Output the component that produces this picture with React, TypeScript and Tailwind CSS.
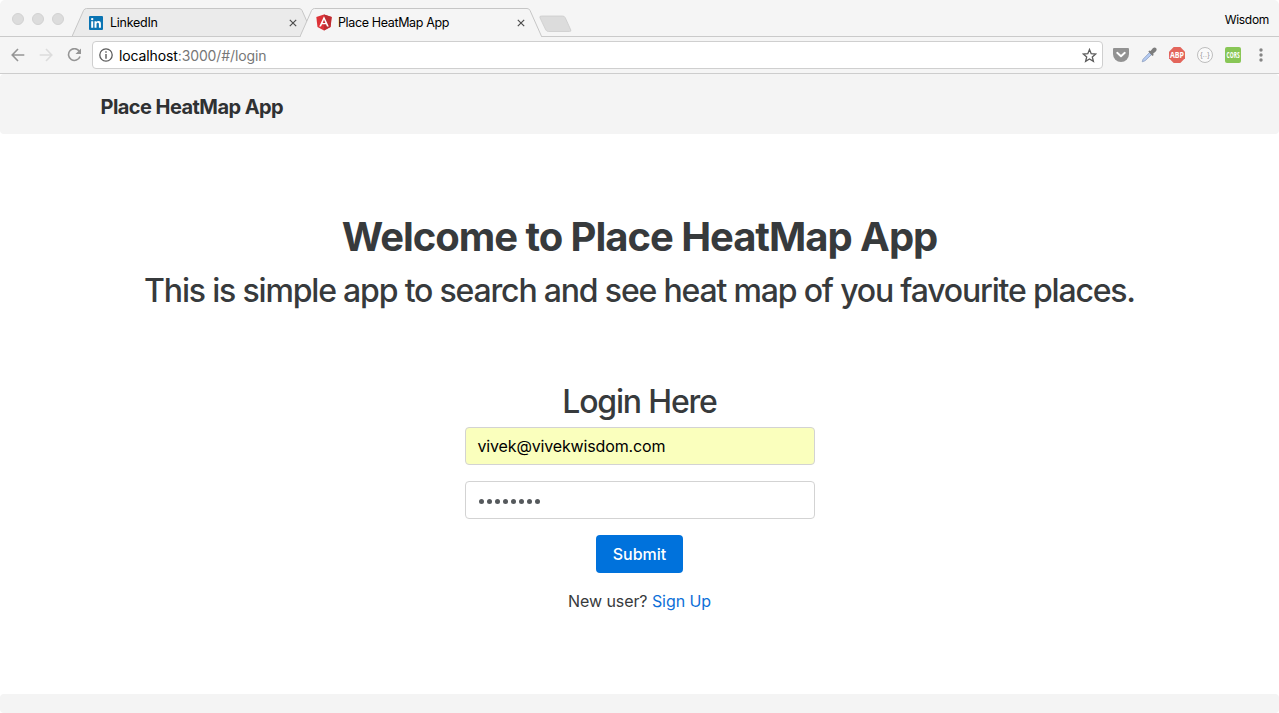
import React from "react";

function TabShape({ active }: { active?: boolean }) {
  return (
    <svg className="absolute inset-0" width="242" height="29" viewBox="0 0 242 29" fill="none">
      <path
        d="M0 28.5 L11.6 2.4 Q12.6 0.5 14.5 0.5 H227 Q229 0.5 230 2.4 L241.6 28.5"
        fill={active ? "#f5f5f5" : "#ebebeb"}
        stroke="#c6c6c6"
      />
      {active ? <path d="M1 28.5H241" stroke="#f5f5f5" /> : <path d="M0 28.5H242" stroke="#cacaca" />}
    </svg>
  );
}

function CloseIcon() {
  return (
    <svg width="8" height="8" viewBox="0 0 8 8" stroke="#4d4d4d" strokeWidth="1.2">
      <path d="M0.8 0.8L7.2 7.2M7.2 0.8L0.8 7.2" />
    </svg>
  );
}

function LinkedInIcon() {
  return (
    <svg width="14" height="14" viewBox="0 0 14 14">
      <rect width="14" height="14" rx="1" fill="#0a74b3" />
      <circle cx="3.2" cy="3.1" r="1.2" fill="#fff" />
      <path d="M2.2 5.2h2v6.6h-2zM5.5 5.2h1.9v.9c.4-.7 1.1-1.1 2-1.1 2 0 2.5 1.3 2.5 3v3.8h-2V8.4c0-.9-.1-1.7-1.1-1.7-1 0-1.3.7-1.3 1.7v3.4h-2z" fill="#fff" />
    </svg>
  );
}

function AngularIcon() {
  return (
    <svg width="16" height="17" viewBox="0 0 16 17">
      <path d="M8 0.4L15.7 3.1L14.5 13L8 16.4L1.5 13L0.3 3.1Z" fill="#dd3237" />
      <path d="M8 0.4L15.7 3.1L14.5 13L8 16.4Z" fill="#bd2d32" />
      <path d="M8 2.2L3.2 12.6H5L6 10.3H10L11 12.6H12.8ZM8 5.7L9.4 8.9H6.6Z" fill="#fff" fillRule="evenodd" />
    </svg>
  );
}

function TitleBar() {
  return (
    <div className="flex h-[37px] items-start border-b border-[#cacaca]">
      <div className="flex gap-2 pt-[13px] pl-3">
        <span className="size-3 rounded-full border border-[#d2d2d2] bg-[#dcdcdc]" />
        <span className="size-3 rounded-full border border-[#d2d2d2] bg-[#dcdcdc]" />
        <span className="size-3 rounded-full border border-[#d2d2d2] bg-[#dcdcdc]" />
      </div>
      <div className="relative mt-2 ml-2 flex h-[29px] w-[242px] shrink-0 items-center">
        <TabShape />
        <div className="relative flex flex-1 items-center pr-[17px] pl-[17px]">
          <LinkedInIcon />
          <span className="ml-[7px] flex-1 pt-px text-[12.5px] leading-[18px] tracking-[-0.27px] text-black">LinkedIn</span>
          <CloseIcon />
        </div>
      </div>
      <div className="relative mt-2 -ml-[14px] flex h-[29px] w-[242px] shrink-0 items-center">
        <TabShape active />
        <div className="relative flex flex-1 items-center pr-[17px] pl-4">
          <AngularIcon />
          <span className="ml-[6px] flex-1 pt-px text-[12.5px] leading-[18px] tracking-[-0.36px] text-black">Place HeatMap App</span>
          <CloseIcon />
        </div>
      </div>
      <svg className="mt-[15px] -ml-[3px]" width="33" height="18" viewBox="0 0 33 18">
        <path d="M2.5 1H23.5Q25.5 1 26.3 2.8L31.8 15Q32.3 16.5 30.5 16.5H9.5Q7.5 16.5 6.7 14.8L0.9 2.6Q0.3 1 2.5 1Z" fill="#dcdcdc" stroke="#cbcbcb" strokeWidth="0.8" />
      </svg>
      <span className="mt-3 mr-[10px] ml-auto text-[12px] leading-4 tracking-[-0.3px] text-black">Wisdom</span>
    </div>
  );
}

function Extensions() {
  return (
    <div className="flex items-center gap-3">
      <svg width="16" height="16" viewBox="0 0 16 16">
        <path d="M1 1h14Q16 1 16 2V7a8 8 0 0 1-16 0V2Q0 1 1 1Z" fill="#929292" />
        <path d="M4.2 5.8L8 9.3L11.8 5.8" fill="none" stroke="#fff" strokeWidth="1.9" strokeLinecap="round" strokeLinejoin="round" />
      </svg>
      <svg width="16" height="16" viewBox="0 0 16 16">
        <path d="M1.2 14.8L2.1 12.2L8.6 5.5L10.6 7.5L4.1 13.7Z" fill="#b4cbf3" stroke="#94a5c4" strokeWidth="0.9" />
        <path d="M7.3 4.6L8.6 3.5L9.6 4L11.8 1.3Q13.5 -0.2 15 1.100Q16.400 2.700 14.700 4.500L12.100 6.700L12.700 7.900L11.400 9Z" fill="#7d7d7d" />
      </svg>
      <svg width="16" height="16" viewBox="0 0 16 16">
        <path d="M4.700 0H11.300L16 4.700V11.300L11.300 16H4.700L0 11.300V4.700Z" fill="#e3655b" />
        <text x="1" y="11" fontSize="8" fontWeight="700" fontFamily="Open Sans, sans-serif" fill="#fff" textLength="14" lengthAdjust="spacingAndGlyphs">ABP</text>
      </svg>
      <svg width="16" height="16" viewBox="0 0 16 16">
        <circle cx="8" cy="8" r="7.500" fill="#fafafa" stroke="#bdbdbd" />
        <text x="3.200" y="10" fontSize="7" fontFamily="Liberation Sans, sans-serif" fill="#999" textLength="9.500">{"{..}"}</text>
      </svg>
      <svg width="16" height="16" viewBox="0 0 16 16">
        <rect width="16" height="16" rx="2" fill="#88c656" />
        <g transform="translate(1.600 10.800) scale(0.620 1)">
          <text fontSize="8" fontWeight="700" fontFamily="Open Sans, sans-serif" fill="#fff">CORS</text>
        </g>
      </svg>
      <svg className="ml-1" width="8" height="16" viewBox="0 0 8 16" fill="#858585">
        <circle cx="4" cy="3" r="1.700" />
        <circle cx="4" cy="8" r="1.700" />
        <circle cx="4" cy="13" r="1.700" />
      </svg>
    </div>
  );
}

function Toolbar() {
  return (
    <div className="flex h-[37px] items-center border-b border-[#cdcdcd] pr-[14px] pl-[11px]">
      <svg width="14" height="14" viewBox="0 0 14 14" fill="none" stroke="#959595" strokeWidth="1.600">
        <path d="M13.300 7H1.300M7 1L1.200 7L7 13" />
      </svg>
      <svg className="ml-[14px]" width="14" height="14" viewBox="0 0 14 14" fill="none" stroke="#dcdcdc" strokeWidth="1.600">
        <path d="M0.700 7H12.700M7 1L12.800 7L7 13" />
      </svg>
      <svg className="ml-[14px]" width="15" height="14" viewBox="0 0 15 14">
        <path d="M12.300 3.200A5.900 5.900 0 1 0 13 8.500" fill="none" stroke="#959595" strokeWidth="1.600" />
        <path d="M14 0.500V6H8.500Z" fill="#959595" />
      </svg>
      <div className="mr-[10px] ml-[10px] flex h-7 flex-1 items-center rounded-[4px] border border-[#cfcfcf] bg-white pr-[5px] pl-[6px]">
        <svg width="14" height="14" viewBox="0 0 14 14">
          <circle cx="7" cy="7" r="6.200" fill="none" stroke="#5b5b5b" strokeWidth="1.300" />
          <path d="M6.300 3.200h1.400v1.500H6.300zM6.300 6h1.400v4.800H6.300z" fill="#5b5b5b" />
        </svg>
        <span className="ml-[6px] flex-1 text-[14px] tracking-[-0.12px] text-black">
          localhost<span className="text-[#777]">:3000/#/login</span>
        </span>
        <svg width="15" height="15" viewBox="0 0 15 15">
          <path d="M7.500 1.500L9.200 5.700L13.800 6L10.300 8.900L11.400 13.300L7.500 10.900L3.600 13.300L4.700 8.900L1.200 6L5.800 5.700Z" fill="none" stroke="#5b5b5b" strokeWidth="1.300" />
        </svg>
      </div>
      <Extensions />
    </div>
  );
}

export default function App() {
  return (
    <div className="flex h-[713px] w-[1279px] flex-col overflow-hidden bg-white font-['Inter',sans-serif] text-[#373a3c]">
      <header className="shrink-0 rounded-t-[5px] bg-[#f5f5f5]">
        <TitleBar />
        <Toolbar />
      </header>
      <nav className="flex h-[60px] shrink-0 items-center rounded-[4px] bg-[#f4f4f4] pl-[100.5px]">
        <a className="mt-[6px] text-[20px] leading-[30px] font-bold tracking-[-0.56px] text-[#2f3133]">Place HeatMap App</a>
      </nav>
      <main className="flex flex-1 flex-col items-center pt-[81px]">
        <h1 className="text-[40px] leading-[44px] font-bold tracking-[-1.04px] whitespace-nowrap">Welcome to Place HeatMap App</h1>
        <h2 className="mt-[14px] text-[32px] leading-[35px] font-medium tracking-[-1.18px] whitespace-nowrap">This is simple app to search and see heat map of you favourite places.</h2>
        <form className="mt-[76px] flex w-[350px] flex-col items-center">
          <h2 className="text-[32px] leading-[35px] font-medium tracking-[-1.18px]">Login Here</h2>
          <div className="mt-2 flex h-[38px] w-full items-center rounded-[4px] border border-[#d3d3d3] bg-[#faffbd] px-3 text-[16px] tracking-[-0.15px] text-black">vivek@vivekwisdom.com</div>
          <div className="mt-4 flex h-[38px] w-full items-center gap-[3px] rounded-[4px] border border-[#d3d3d3] bg-white px-[13px] pt-[3px]">
            {Array.from({ length: 8 }, (_, i) => (
              <span key={i} className="size-[5px] rounded-full bg-[#55595c]" />
            ))}
          </div>
          <button type="button" className="mt-4 h-[38px] w-[87px] rounded-[4px] bg-[#0072dc] text-[16px] font-medium text-white">Submit</button>
          <p className="mt-4 text-[16px] leading-6 tracking-[-0.07px]">
            New user? <a className="text-[#0d6fd8]">Sign Up</a>
          </p>
        </form>
      </main>
      <footer className="h-[19px] shrink-0 rounded-[4px] bg-[#f4f4f4]" />
    </div>
  );
}
